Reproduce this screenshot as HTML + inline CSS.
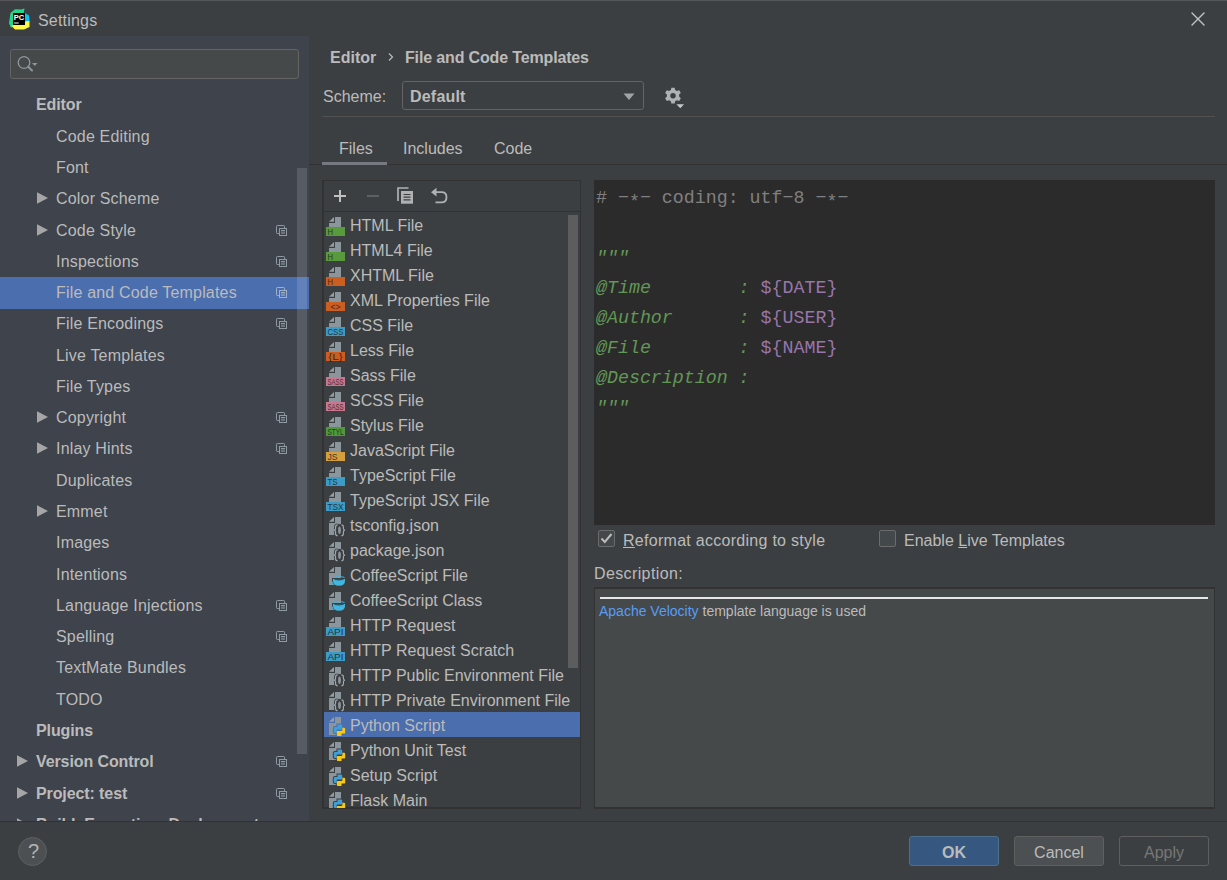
<!DOCTYPE html>
<html><head><meta charset="utf-8">
<style>
*{box-sizing:border-box;margin:0;padding:0}
html,body{width:1227px;height:880px;overflow:hidden;background:#3c3f41}
body{position:relative;font-family:"Liberation Sans",sans-serif;font-size:16px;color:#bbbbbb}
.a{position:absolute;white-space:pre}
.bold{font-weight:bold}
.code{font-family:"Liberation Mono",monospace;font-size:18.3px;line-height:30px}
</style></head><body>
<div class="a" style="left:0;top:0;width:1227px;height:1px;background:#555759"></div>
<!-- title -->
<div class="a" style="left:38px;top:10px;line-height:22px;letter-spacing:0.2px">Settings</div>
<svg class="a" style="left:9px;top:8px" width="22" height="22" viewBox="0 0 22 22">
 <polygon points="0,15 1.5,5 6,1.2 12,1.5 15.5,0.5 14.5,6 8,12 2,20" fill="#21d789"/>
 <polygon points="14,4 20,7.5 20.5,13.5 13,12" fill="#07c3f2"/>
 <polygon points="2.5,18 10,13.5 20.5,13 20.5,19 15,21.5 6,21.5" fill="#fcf84a"/>
 <rect x="4" y="5" width="12" height="12" fill="#000"/>
 <text x="4.8" y="11.6" font-family="Liberation Sans" font-weight="bold" font-size="7.5" fill="#fff" textLength="10.5" lengthAdjust="spacingAndGlyphs">PC</text>
 <rect x="5.2" y="14.5" width="4.5" height="1" fill="#fff"/>
</svg>
<svg class="a" style="left:1190px;top:11px" width="16" height="16" viewBox="0 0 16 16"><path d="M2 2L14 14M14 2L2 14" stroke="#c4c4c4" stroke-width="1.4" stroke-linecap="round"/></svg>

<!-- side panel -->
<div class="a" style="left:0;top:36px;width:309px;height:785px;background:#3e434c"></div>
<div class="a" style="left:10px;top:49px;width:289px;height:30px;background:#45494a;border:1px solid #646464;border-radius:3px"></div>
<svg class="a" style="left:16px;top:54px" width="26" height="22" viewBox="0 0 26 22">
 <circle cx="8" cy="8.5" r="5.8" fill="none" stroke="#8c969c" stroke-width="1.3"/>
 <path d="M12.2 12.7L16 16.5" stroke="#8c969c" stroke-width="2" stroke-linecap="round"/>
 <path d="M16 9L21.5 9L18.75 12z" fill="#8c969c"/>
</svg>
<div class="a" style="left:0;top:36px;width:309px;height:785px;overflow:hidden">
<div class="a bold" style="left:36px;top:53.40px;line-height:32px;letter-spacing:-0.1px">Editor</div>
<div class="a" style="left:56px;top:84.68px;line-height:32px;letter-spacing:0.18px">Code Editing</div>
<div class="a" style="left:56px;top:115.96px;line-height:32px;letter-spacing:0.18px">Font</div>
<svg class="a" style="left:37px;top:156px" width="12" height="13" viewBox="0 0 12 13"><path d="M0 0.3L11 6L0 11.7z" fill="#a6a6a6"/></svg>
<div class="a" style="left:56px;top:147.24px;line-height:32px;letter-spacing:0.18px">Color Scheme</div>
<svg class="a" style="left:37px;top:188px" width="12" height="13" viewBox="0 0 12 13"><path d="M0 0.3L11 6L0 11.7z" fill="#a6a6a6"/></svg>
<div class="a" style="left:56px;top:178.52px;line-height:32px;letter-spacing:0.18px">Code Style</div>
<svg class="a" style="left:275px;top:188px" width="14" height="14" viewBox="0 0 14 14"><rect x="1.5" y="1.5" width="8" height="8" rx="0.8" fill="none" stroke="#8e99a1" stroke-width="1"/><rect x="4" y="4" width="8" height="8" fill="#8e99a1"/><rect x="5" y="5" width="6" height="6" fill="#3e434c"/><rect x="6" y="6" width="4" height="1.3" fill="#8e99a1"/><rect x="6" y="8.2" width="4" height="1.6" fill="#8e99a1" opacity="0.7"/></svg>
<div class="a" style="left:56px;top:209.80px;line-height:32px;letter-spacing:0.18px">Inspections</div>
<svg class="a" style="left:275px;top:219px" width="14" height="14" viewBox="0 0 14 14"><rect x="1.5" y="1.5" width="8" height="8" rx="0.8" fill="none" stroke="#8e99a1" stroke-width="1"/><rect x="4" y="4" width="8" height="8" fill="#8e99a1"/><rect x="5" y="5" width="6" height="6" fill="#3e434c"/><rect x="6" y="6" width="4" height="1.3" fill="#8e99a1"/><rect x="6" y="8.2" width="4" height="1.6" fill="#8e99a1" opacity="0.7"/></svg>
<div class="a" style="left:0;top:241px;width:309px;height:32px;background:#4b6eaf"></div>
<div class="a" style="left:56px;top:241.08px;line-height:32px;letter-spacing:0.18px">File and Code Templates</div>
<svg class="a" style="left:275px;top:250px" width="14" height="14" viewBox="0 0 14 14"><rect x="1.5" y="1.5" width="8" height="8" rx="0.8" fill="none" stroke="#9fb0c8" stroke-width="1"/><rect x="4" y="4" width="8" height="8" fill="#9fb0c8"/><rect x="5" y="5" width="6" height="6" fill="#4b6eaf"/><rect x="6" y="6" width="4" height="1.3" fill="#9fb0c8"/><rect x="6" y="8.2" width="4" height="1.6" fill="#9fb0c8" opacity="0.7"/></svg>
<div class="a" style="left:56px;top:272.36px;line-height:32px;letter-spacing:0.18px">File Encodings</div>
<svg class="a" style="left:275px;top:281px" width="14" height="14" viewBox="0 0 14 14"><rect x="1.5" y="1.5" width="8" height="8" rx="0.8" fill="none" stroke="#8e99a1" stroke-width="1"/><rect x="4" y="4" width="8" height="8" fill="#8e99a1"/><rect x="5" y="5" width="6" height="6" fill="#3e434c"/><rect x="6" y="6" width="4" height="1.3" fill="#8e99a1"/><rect x="6" y="8.2" width="4" height="1.6" fill="#8e99a1" opacity="0.7"/></svg>
<div class="a" style="left:56px;top:303.64px;line-height:32px;letter-spacing:0.18px">Live Templates</div>
<div class="a" style="left:56px;top:334.92px;line-height:32px;letter-spacing:0.18px">File Types</div>
<svg class="a" style="left:37px;top:375px" width="12" height="13" viewBox="0 0 12 13"><path d="M0 0.3L11 6L0 11.7z" fill="#a6a6a6"/></svg>
<div class="a" style="left:56px;top:366.20px;line-height:32px;letter-spacing:0.18px">Copyright</div>
<svg class="a" style="left:275px;top:375px" width="14" height="14" viewBox="0 0 14 14"><rect x="1.5" y="1.5" width="8" height="8" rx="0.8" fill="none" stroke="#8e99a1" stroke-width="1"/><rect x="4" y="4" width="8" height="8" fill="#8e99a1"/><rect x="5" y="5" width="6" height="6" fill="#3e434c"/><rect x="6" y="6" width="4" height="1.3" fill="#8e99a1"/><rect x="6" y="8.2" width="4" height="1.6" fill="#8e99a1" opacity="0.7"/></svg>
<svg class="a" style="left:37px;top:406px" width="12" height="13" viewBox="0 0 12 13"><path d="M0 0.3L11 6L0 11.7z" fill="#a6a6a6"/></svg>
<div class="a" style="left:56px;top:397.48px;line-height:32px;letter-spacing:0.18px">Inlay Hints</div>
<svg class="a" style="left:275px;top:406px" width="14" height="14" viewBox="0 0 14 14"><rect x="1.5" y="1.5" width="8" height="8" rx="0.8" fill="none" stroke="#8e99a1" stroke-width="1"/><rect x="4" y="4" width="8" height="8" fill="#8e99a1"/><rect x="5" y="5" width="6" height="6" fill="#3e434c"/><rect x="6" y="6" width="4" height="1.3" fill="#8e99a1"/><rect x="6" y="8.2" width="4" height="1.6" fill="#8e99a1" opacity="0.7"/></svg>
<div class="a" style="left:56px;top:428.76px;line-height:32px;letter-spacing:0.18px">Duplicates</div>
<svg class="a" style="left:37px;top:469px" width="12" height="13" viewBox="0 0 12 13"><path d="M0 0.3L11 6L0 11.7z" fill="#a6a6a6"/></svg>
<div class="a" style="left:56px;top:460.04px;line-height:32px;letter-spacing:0.18px">Emmet</div>
<div class="a" style="left:56px;top:491.32px;line-height:32px;letter-spacing:0.18px">Images</div>
<div class="a" style="left:56px;top:522.60px;line-height:32px;letter-spacing:0.18px">Intentions</div>
<div class="a" style="left:56px;top:553.88px;line-height:32px;letter-spacing:0.18px">Language Injections</div>
<svg class="a" style="left:275px;top:563px" width="14" height="14" viewBox="0 0 14 14"><rect x="1.5" y="1.5" width="8" height="8" rx="0.8" fill="none" stroke="#8e99a1" stroke-width="1"/><rect x="4" y="4" width="8" height="8" fill="#8e99a1"/><rect x="5" y="5" width="6" height="6" fill="#3e434c"/><rect x="6" y="6" width="4" height="1.3" fill="#8e99a1"/><rect x="6" y="8.2" width="4" height="1.6" fill="#8e99a1" opacity="0.7"/></svg>
<div class="a" style="left:56px;top:585.16px;line-height:32px;letter-spacing:0.18px">Spelling</div>
<svg class="a" style="left:275px;top:594px" width="14" height="14" viewBox="0 0 14 14"><rect x="1.5" y="1.5" width="8" height="8" rx="0.8" fill="none" stroke="#8e99a1" stroke-width="1"/><rect x="4" y="4" width="8" height="8" fill="#8e99a1"/><rect x="5" y="5" width="6" height="6" fill="#3e434c"/><rect x="6" y="6" width="4" height="1.3" fill="#8e99a1"/><rect x="6" y="8.2" width="4" height="1.6" fill="#8e99a1" opacity="0.7"/></svg>
<div class="a" style="left:56px;top:616.44px;line-height:32px;letter-spacing:0.18px">TextMate Bundles</div>
<div class="a" style="left:56px;top:647.72px;line-height:32px;letter-spacing:0.18px">TODO</div>
<div class="a bold" style="left:36px;top:679.00px;line-height:32px;letter-spacing:-0.1px">Plugins</div>
<svg class="a" style="left:17px;top:719px" width="12" height="13" viewBox="0 0 12 13"><path d="M0 0.3L11 6L0 11.7z" fill="#a6a6a6"/></svg>
<div class="a bold" style="left:36px;top:710.28px;line-height:32px;letter-spacing:-0.1px">Version Control</div>
<svg class="a" style="left:275px;top:719px" width="14" height="14" viewBox="0 0 14 14"><rect x="1.5" y="1.5" width="8" height="8" rx="0.8" fill="none" stroke="#8e99a1" stroke-width="1"/><rect x="4" y="4" width="8" height="8" fill="#8e99a1"/><rect x="5" y="5" width="6" height="6" fill="#3e434c"/><rect x="6" y="6" width="4" height="1.3" fill="#8e99a1"/><rect x="6" y="8.2" width="4" height="1.6" fill="#8e99a1" opacity="0.7"/></svg>
<svg class="a" style="left:17px;top:751px" width="12" height="13" viewBox="0 0 12 13"><path d="M0 0.3L11 6L0 11.7z" fill="#a6a6a6"/></svg>
<div class="a bold" style="left:36px;top:741.56px;line-height:32px;letter-spacing:-0.1px">Project: test</div>
<svg class="a" style="left:275px;top:751px" width="14" height="14" viewBox="0 0 14 14"><rect x="1.5" y="1.5" width="8" height="8" rx="0.8" fill="none" stroke="#8e99a1" stroke-width="1"/><rect x="4" y="4" width="8" height="8" fill="#8e99a1"/><rect x="5" y="5" width="6" height="6" fill="#3e434c"/><rect x="6" y="6" width="4" height="1.3" fill="#8e99a1"/><rect x="6" y="8.2" width="4" height="1.6" fill="#8e99a1" opacity="0.7"/></svg>
<svg class="a" style="left:17px;top:782px" width="12" height="13" viewBox="0 0 12 13"><path d="M0 0.3L11 6L0 11.7z" fill="#a6a6a6"/></svg>
<div class="a bold" style="left:36px;top:772.84px;line-height:32px;letter-spacing:-0.1px">Build, Execution, Deployment</div>
</div>
<div class="a" style="left:297px;top:168px;width:10px;height:586px;background:rgba(255,255,255,0.13)"></div>

<!-- right panel -->
<div class="a bold" style="left:330px;top:47px;line-height:22px">Editor</div>
<svg class="a" style="left:387px;top:52px" width="8" height="10" viewBox="0 0 8 10"><path d="M2 1.5L5.5 5L2 8.5" fill="none" stroke="#bbbbbb" stroke-width="1.2"/></svg>
<div class="a bold" style="left:405px;top:47px;line-height:22px;letter-spacing:-0.15px">File and Code Templates</div>

<div class="a" style="left:323px;top:86px;line-height:22px">Scheme:</div>
<div class="a" style="left:402px;top:81px;width:242px;height:29px;border:1px solid #646464;border-radius:3px;background:#3c3f41"></div>
<div class="a bold" style="left:410px;top:86px;line-height:22px;letter-spacing:0.2px">Default</div>
<svg class="a" style="left:623px;top:93px" width="13" height="8" viewBox="0 0 13 8"><path d="M0.5 0.5H11.5L6 7z" fill="#a0a3a6"/></svg>
<svg class="a" style="left:663px;top:86px" width="24" height="24" viewBox="0 0 24 24">
 <g transform="translate(10,9.8) scale(1.09) translate(-10,-9)"><path fill="#afb1b3" fill-rule="evenodd" d="M8.5 1.5h3l0.5 2.2 1.6 0.9 2.1-0.8 1.5 2.6-1.6 1.5v1.8l1.6 1.5-1.5 2.6-2.1-0.8-1.6 0.9-0.5 2.2h-3l-0.5-2.2-1.6-0.9-2.1 0.8-1.5-2.6 1.6-1.5v-1.8l-1.6-1.5 1.5-2.6 2.1 0.8 1.6-0.9z M12.5 9a2.5 2.5 0 1 0 -5 0a2.5 2.5 0 1 0 5 0z"/></g>
 <path d="M13.5 18.3H21L17.25 22.3z" fill="#c8c8c8"/>
</svg>
<div class="a" style="left:322px;top:116px;width:893px;height:1px;background:#515151"></div>

<!-- tabs -->
<div class="a" style="left:309px;top:164px;width:918px;height:1px;background:#323232"></div>
<div class="a" style="left:339px;top:137.5px;line-height:22px">Files</div>
<div class="a" style="left:403px;top:137.5px;line-height:22px">Includes</div>
<div class="a" style="left:494px;top:137.5px;line-height:22px">Code</div>
<div class="a" style="left:322px;top:162px;width:65px;height:3px;background:#747a80"></div>

<!-- list panel -->
<div class="a" style="left:322px;top:180px;width:259px;height:629px;border:1px solid #323232;border-left-width:2px;border-bottom-width:2px;background:#3c3f41"></div>
<div class="a" style="left:324px;top:211px;width:256px;height:1px;background:#323232"></div>
<svg class="a" style="left:328px;top:184px" width="130" height="24" viewBox="0 0 130 24">
 <path d="M12 6V18M6 12H18" stroke="#c0c0c0" stroke-width="2"/>
 <path d="M39 12H51" stroke="#5e6062" stroke-width="2"/>
 <path d="M70 17V4H80.5" fill="none" stroke="#afb1b3" stroke-width="1.7"/>
 <rect x="73" y="7" width="12" height="12.7" fill="#afb1b3"/>
 <path d="M75.5 10.5H82.5M75.5 13.2H82.5M75.5 15.9H82.5" stroke="#3c3f41" stroke-width="1.2"/>
 <path d="M107.5 8.2H113.5Q118.5 8.2 118.5 13.2Q118.5 18.3 113.5 18.3H107.5" fill="none" stroke="#afb1b3" stroke-width="1.8"/>
 <path d="M103 8.2L108.5 3.8V12.6z" fill="#afb1b3"/>
</svg>
<div class="a" style="left:324px;top:212px;width:256px;height:596px;overflow:hidden">
<svg class="a" style="left:2px;top:4px" width="21" height="21" viewBox="0 0 21 21"><path d="M9 1H15V11H3V7H9z" fill="#8b959c"/><path d="M3 5.8L8 1V5.8z" fill="#939da4"/><rect x="0" y="11" width="19" height="9" fill="#599b3c"/><text x="1.5" y="18.8" font-family="Liberation Sans" font-size="9.5" fill="#1a1a1a" opacity="0.8" textLength="5.5" lengthAdjust="spacingAndGlyphs">H</text></svg>
<div class="a" style="left:26px;top:1.30px;line-height:25px">HTML File</div>
<svg class="a" style="left:2px;top:29px" width="21" height="21" viewBox="0 0 21 21"><path d="M9 1H15V11H3V7H9z" fill="#8b959c"/><path d="M3 5.8L8 1V5.8z" fill="#939da4"/><rect x="0" y="11" width="19" height="9" fill="#599b3c"/><text x="1.5" y="18.8" font-family="Liberation Sans" font-size="9.5" fill="#1a1a1a" opacity="0.8" textLength="5.5" lengthAdjust="spacingAndGlyphs">H</text></svg>
<div class="a" style="left:26px;top:26.30px;line-height:25px">HTML4 File</div>
<svg class="a" style="left:2px;top:54px" width="21" height="21" viewBox="0 0 21 21"><path d="M9 1H15V11H3V7H9z" fill="#8b959c"/><path d="M3 5.8L8 1V5.8z" fill="#939da4"/><rect x="0" y="11" width="19" height="9" fill="#cc5e22"/><text x="1.5" y="18.8" font-family="Liberation Sans" font-size="9.5" fill="#1a1a1a" opacity="0.8" textLength="5.5" lengthAdjust="spacingAndGlyphs">H</text></svg>
<div class="a" style="left:26px;top:51.30px;line-height:25px">XHTML File</div>
<svg class="a" style="left:2px;top:79px" width="21" height="21" viewBox="0 0 21 21"><path d="M9 1H15V11H3V7H9z" fill="#8b959c"/><path d="M3 5.8L8 1V5.8z" fill="#939da4"/><rect x="0" y="11" width="19" height="9" fill="#cc5e22"/><text x="4.5" y="18.8" font-family="Liberation Sans" font-size="9.5" fill="#1a1a1a" opacity="0.8" textLength="10" lengthAdjust="spacingAndGlyphs">&lt;&gt;</text></svg>
<div class="a" style="left:26px;top:76.30px;line-height:25px">XML Properties File</div>
<svg class="a" style="left:2px;top:104px" width="21" height="21" viewBox="0 0 21 21"><path d="M9 1H15V11H3V7H9z" fill="#8b959c"/><path d="M3 5.8L8 1V5.8z" fill="#939da4"/><rect x="0" y="11" width="19" height="9" fill="#3c9cc6"/><text x="1.5" y="18.8" font-family="Liberation Sans" font-size="9.5" fill="#1a1a1a" opacity="0.8" textLength="16" lengthAdjust="spacingAndGlyphs">CSS</text></svg>
<div class="a" style="left:26px;top:101.30px;line-height:25px">CSS File</div>
<svg class="a" style="left:2px;top:129px" width="21" height="21" viewBox="0 0 21 21"><path d="M9 1H15V11H3V7H9z" fill="#8b959c"/><path d="M3 5.8L8 1V5.8z" fill="#939da4"/><rect x="0" y="11" width="19" height="9" fill="#cc5e22"/><text x="2.25" y="18.8" font-family="Liberation Sans" font-size="9.5" fill="#1a1a1a" opacity="0.8" textLength="14.5" lengthAdjust="spacingAndGlyphs">{L}</text></svg>
<div class="a" style="left:26px;top:126.30px;line-height:25px">Less File</div>
<svg class="a" style="left:2px;top:154px" width="21" height="21" viewBox="0 0 21 21"><path d="M9 1H15V11H3V7H9z" fill="#8b959c"/><path d="M3 5.8L8 1V5.8z" fill="#939da4"/><rect x="0" y="11" width="19" height="9" fill="#c77890"/><text x="1.5" y="18.8" font-family="Liberation Sans" font-size="9.5" fill="#1a1a1a" opacity="0.8" textLength="16" lengthAdjust="spacingAndGlyphs">SASS</text></svg>
<div class="a" style="left:26px;top:151.30px;line-height:25px">Sass File</div>
<svg class="a" style="left:2px;top:179px" width="21" height="21" viewBox="0 0 21 21"><path d="M9 1H15V11H3V7H9z" fill="#8b959c"/><path d="M3 5.8L8 1V5.8z" fill="#939da4"/><rect x="0" y="11" width="19" height="9" fill="#c77890"/><text x="1.5" y="18.8" font-family="Liberation Sans" font-size="9.5" fill="#1a1a1a" opacity="0.8" textLength="16" lengthAdjust="spacingAndGlyphs">SASS</text></svg>
<div class="a" style="left:26px;top:176.30px;line-height:25px">SCSS File</div>
<svg class="a" style="left:2px;top:204px" width="21" height="21" viewBox="0 0 21 21"><path d="M9 1H15V11H3V7H9z" fill="#8b959c"/><path d="M3 5.8L8 1V5.8z" fill="#939da4"/><rect x="0" y="11" width="19" height="9" fill="#4e9a3a"/><text x="1.5" y="18.8" font-family="Liberation Sans" font-size="9.5" fill="#1a1a1a" opacity="0.8" textLength="16" lengthAdjust="spacingAndGlyphs">STYL</text></svg>
<div class="a" style="left:26px;top:201.30px;line-height:25px">Stylus File</div>
<svg class="a" style="left:2px;top:229px" width="21" height="21" viewBox="0 0 21 21"><path d="M9 1H15V11H3V7H9z" fill="#8b959c"/><path d="M3 5.8L8 1V5.8z" fill="#939da4"/><rect x="0" y="11" width="19" height="9" fill="#d69f3d"/><text x="1.5" y="18.8" font-family="Liberation Sans" font-size="9.5" fill="#1a1a1a" opacity="0.8" textLength="10" lengthAdjust="spacingAndGlyphs">JS</text></svg>
<div class="a" style="left:26px;top:226.30px;line-height:25px">JavaScript File</div>
<svg class="a" style="left:2px;top:254px" width="21" height="21" viewBox="0 0 21 21"><path d="M9 1H15V11H3V7H9z" fill="#8b959c"/><path d="M3 5.8L8 1V5.8z" fill="#939da4"/><rect x="0" y="11" width="19" height="9" fill="#3c9cc6"/><text x="1.5" y="18.8" font-family="Liberation Sans" font-size="9.5" fill="#1a1a1a" opacity="0.8" textLength="10" lengthAdjust="spacingAndGlyphs">TS</text></svg>
<div class="a" style="left:26px;top:251.30px;line-height:25px">TypeScript File</div>
<svg class="a" style="left:2px;top:279px" width="21" height="21" viewBox="0 0 21 21"><path d="M9 1H15V11H3V7H9z" fill="#8b959c"/><path d="M3 5.8L8 1V5.8z" fill="#939da4"/><rect x="0" y="11" width="19" height="9" fill="#3c9cc6"/><text x="1.5" y="18.8" font-family="Liberation Sans" font-size="9.5" fill="#1a1a1a" opacity="0.8" textLength="16" lengthAdjust="spacingAndGlyphs">TSX</text></svg>
<div class="a" style="left:26px;top:276.30px;line-height:25px">TypeScript JSX File</div>
<svg class="a" style="left:2px;top:304px" width="21" height="21" viewBox="0 0 21 21"><path d="M9 1H15V19H3V7H9z" fill="#8b959c"/><path d="M3 5.8L8 1V5.8z" fill="#939da4"/><path d="M11.6 8.9Q9.6 8.9 9.6 10.9V12.6Q9.6 14.2 7.9 14.2Q9.6 14.2 9.6 15.8V17.8Q9.6 19.8 11.6 19.8" fill="#3c3f41" stroke="#3c3f41" stroke-width="3"/><path d="M15.4 8.9Q17.4 8.9 17.4 10.9V12.6Q17.4 14.2 19.1 14.2Q17.4 14.2 17.4 15.8V17.8Q17.4 19.8 15.4 19.8" fill="#3c3f41" stroke="#3c3f41" stroke-width="3"/><rect x="10" y="8" width="7" height="13" fill="#3c3f41"/><g fill="none" stroke="#a3adb4" stroke-width="1.1"><path d="M11.6 8.9Q9.6 8.9 9.6 10.9V12.6Q9.6 14.2 7.9 14.2Q9.6 14.2 9.6 15.8V17.8Q9.6 19.8 11.6 19.8"/><path d="M15.4 8.9Q17.4 8.9 17.4 10.9V12.6Q17.4 14.2 19.1 14.2Q17.4 14.2 17.4 15.8V17.8Q17.4 19.8 15.4 19.8"/></g><ellipse cx="13.5" cy="14.3" rx="1.4" ry="3.7" fill="#8b959c"/></svg>
<div class="a" style="left:26px;top:301.30px;line-height:25px">tsconfig.json</div>
<svg class="a" style="left:2px;top:329px" width="21" height="21" viewBox="0 0 21 21"><path d="M9 1H15V19H3V7H9z" fill="#8b959c"/><path d="M3 5.8L8 1V5.8z" fill="#939da4"/><path d="M11.6 8.9Q9.6 8.9 9.6 10.9V12.6Q9.6 14.2 7.9 14.2Q9.6 14.2 9.6 15.8V17.8Q9.6 19.8 11.6 19.8" fill="#3c3f41" stroke="#3c3f41" stroke-width="3"/><path d="M15.4 8.9Q17.4 8.9 17.4 10.9V12.6Q17.4 14.2 19.1 14.2Q17.4 14.2 17.4 15.8V17.8Q17.4 19.8 15.4 19.8" fill="#3c3f41" stroke="#3c3f41" stroke-width="3"/><rect x="10" y="8" width="7" height="13" fill="#3c3f41"/><g fill="none" stroke="#a3adb4" stroke-width="1.1"><path d="M11.6 8.9Q9.6 8.9 9.6 10.9V12.6Q9.6 14.2 7.9 14.2Q9.6 14.2 9.6 15.8V17.8Q9.6 19.8 11.6 19.8"/><path d="M15.4 8.9Q17.4 8.9 17.4 10.9V12.6Q17.4 14.2 19.1 14.2Q17.4 14.2 17.4 15.8V17.8Q17.4 19.8 15.4 19.8"/></g><ellipse cx="13.5" cy="14.3" rx="1.4" ry="3.7" fill="#8b959c"/></svg>
<div class="a" style="left:26px;top:326.30px;line-height:25px">package.json</div>
<svg class="a" style="left:2px;top:354px" width="21" height="21" viewBox="0 0 21 21"><path d="M9 1H15V19H3V7H9z" fill="#8b959c"/><path d="M3 5.8L8 1V5.8z" fill="#939da4"/><path d="M6 12H20V14.5Q20 20.5 13 20.5Q6 20.5 6 14.5z" fill="#3c3f41"/><path d="M7 13H19V14.8Q19 19.8 13 19.8Q7 19.8 7 14.8z" fill="#40b6e0"/><ellipse cx="13" cy="13.6" rx="5" ry="0.8" fill="#2a5868"/><path d="M8 11.5Q10 10.3 13 11Q16 10.3 18.5 11.5" fill="none" stroke="#40b6e0" stroke-width="1"/><path d="M7.2 16Q5.5 16 5.8 17.6Q6.3 18.6 8.2 18.2" fill="none" stroke="#40b6e0" stroke-width="1"/></svg>
<div class="a" style="left:26px;top:351.30px;line-height:25px">CoffeeScript File</div>
<svg class="a" style="left:2px;top:379px" width="21" height="21" viewBox="0 0 21 21"><path d="M9 1H15V19H3V7H9z" fill="#8b959c"/><path d="M3 5.8L8 1V5.8z" fill="#939da4"/><path d="M6 12H20V14.5Q20 20.5 13 20.5Q6 20.5 6 14.5z" fill="#3c3f41"/><path d="M7 13H19V14.8Q19 19.8 13 19.8Q7 19.8 7 14.8z" fill="#40b6e0"/><ellipse cx="13" cy="13.6" rx="5" ry="0.8" fill="#2a5868"/><path d="M8 11.5Q10 10.3 13 11Q16 10.3 18.5 11.5" fill="none" stroke="#40b6e0" stroke-width="1"/><path d="M7.2 16Q5.5 16 5.8 17.6Q6.3 18.6 8.2 18.2" fill="none" stroke="#40b6e0" stroke-width="1"/></svg>
<div class="a" style="left:26px;top:376.30px;line-height:25px">CoffeeScript Class</div>
<svg class="a" style="left:2px;top:404px" width="21" height="21" viewBox="0 0 21 21"><path d="M9 1H15V11H3V7H9z" fill="#8b959c"/><path d="M3 5.8L8 1V5.8z" fill="#939da4"/><rect x="0" y="11" width="19" height="9" fill="#3c9cc6"/><text x="1.5" y="18.8" font-family="Liberation Sans" font-size="9.5" fill="#1a1a1a" opacity="0.8" textLength="16" lengthAdjust="spacingAndGlyphs">API</text></svg>
<div class="a" style="left:26px;top:401.30px;line-height:25px">HTTP Request</div>
<svg class="a" style="left:2px;top:429px" width="21" height="21" viewBox="0 0 21 21"><path d="M9 1H15V11H3V7H9z" fill="#8b959c"/><path d="M3 5.8L8 1V5.8z" fill="#939da4"/><rect x="0" y="11" width="19" height="9" fill="#3c9cc6"/><text x="1.5" y="18.8" font-family="Liberation Sans" font-size="9.5" fill="#1a1a1a" opacity="0.8" textLength="16" lengthAdjust="spacingAndGlyphs">API</text></svg>
<div class="a" style="left:26px;top:426.30px;line-height:25px">HTTP Request Scratch</div>
<svg class="a" style="left:2px;top:454px" width="21" height="21" viewBox="0 0 21 21"><path d="M9 1H15V19H3V7H9z" fill="#8b959c"/><path d="M3 5.8L8 1V5.8z" fill="#939da4"/><path d="M11.6 8.9Q9.6 8.9 9.6 10.9V12.6Q9.6 14.2 7.9 14.2Q9.6 14.2 9.6 15.8V17.8Q9.6 19.8 11.6 19.8" fill="#3c3f41" stroke="#3c3f41" stroke-width="3"/><path d="M15.4 8.9Q17.4 8.9 17.4 10.9V12.6Q17.4 14.2 19.1 14.2Q17.4 14.2 17.4 15.8V17.8Q17.4 19.8 15.4 19.8" fill="#3c3f41" stroke="#3c3f41" stroke-width="3"/><rect x="10" y="8" width="7" height="13" fill="#3c3f41"/><g fill="none" stroke="#a3adb4" stroke-width="1.1"><path d="M11.6 8.9Q9.6 8.9 9.6 10.9V12.6Q9.6 14.2 7.9 14.2Q9.6 14.2 9.6 15.8V17.8Q9.6 19.8 11.6 19.8"/><path d="M15.4 8.9Q17.4 8.9 17.4 10.9V12.6Q17.4 14.2 19.1 14.2Q17.4 14.2 17.4 15.8V17.8Q17.4 19.8 15.4 19.8"/></g><ellipse cx="13.5" cy="14.3" rx="1.4" ry="3.7" fill="#8b959c"/></svg>
<div class="a" style="left:26px;top:451.30px;line-height:25px">HTTP Public Environment File</div>
<svg class="a" style="left:2px;top:479px" width="21" height="21" viewBox="0 0 21 21"><path d="M9 1H15V19H3V7H9z" fill="#8b959c"/><path d="M3 5.8L8 1V5.8z" fill="#939da4"/><path d="M11.6 8.9Q9.6 8.9 9.6 10.9V12.6Q9.6 14.2 7.9 14.2Q9.6 14.2 9.6 15.8V17.8Q9.6 19.8 11.6 19.8" fill="#3c3f41" stroke="#3c3f41" stroke-width="3"/><path d="M15.4 8.9Q17.4 8.9 17.4 10.9V12.6Q17.4 14.2 19.1 14.2Q17.4 14.2 17.4 15.8V17.8Q17.4 19.8 15.4 19.8" fill="#3c3f41" stroke="#3c3f41" stroke-width="3"/><rect x="10" y="8" width="7" height="13" fill="#3c3f41"/><g fill="none" stroke="#a3adb4" stroke-width="1.1"><path d="M11.6 8.9Q9.6 8.9 9.6 10.9V12.6Q9.6 14.2 7.9 14.2Q9.6 14.2 9.6 15.8V17.8Q9.6 19.8 11.6 19.8"/><path d="M15.4 8.9Q17.4 8.9 17.4 10.9V12.6Q17.4 14.2 19.1 14.2Q17.4 14.2 17.4 15.8V17.8Q17.4 19.8 15.4 19.8"/></g><ellipse cx="13.5" cy="14.3" rx="1.4" ry="3.7" fill="#8b959c"/></svg>
<div class="a" style="left:26px;top:476.30px;line-height:25px">HTTP Private Environment File</div>
<div class="a" style="left:0;top:500px;width:256px;height:25px;background:#4b6eaf"></div>
<svg class="a" style="left:2px;top:504px" width="21" height="21" viewBox="0 0 21 21"><path d="M9 1H15V19H3V7H9z" fill="#8b959c"/><path d="M3 5.8L8 1V5.8z" fill="#939da4"/><path d="M11.5 8.6H15Q16.2 8.6 16.2 9.8V13.6H11.8Q10.6 13.6 10.6 14.8V16.9H9Q7.8 16.9 7.8 15.7V12.2Q7.8 11 9 11H11.5z" fill="#4b6eaf" stroke="#4b6eaf" stroke-width="2"/><path d="M15.5 20H12Q10.8 20 10.8 18.8V15H15.2Q16.4 15 16.4 13.8V11.7H18Q19.2 11.7 19.2 12.9V16.4Q19.2 17.6 18 17.6H15.5z" fill="#4b6eaf" stroke="#4b6eaf" stroke-width="2"/><path d="M11.5 8.6H15Q16.2 8.6 16.2 9.8V13.6H11.8Q10.6 13.6 10.6 14.8V16.9H9Q7.8 16.9 7.8 15.7V12.2Q7.8 11 9 11H11.5z" fill="#3f9fd9"/><path d="M15.5 20H12Q10.8 20 10.8 18.8V15H15.2Q16.4 15 16.4 13.8V11.7H18Q19.2 11.7 19.2 12.9V16.4Q19.2 17.6 18 17.6H15.5z" fill="#f6c915"/></svg>
<div class="a" style="left:26px;top:501.30px;line-height:25px">Python Script</div>
<svg class="a" style="left:2px;top:529px" width="21" height="21" viewBox="0 0 21 21"><path d="M9 1H15V19H3V7H9z" fill="#8b959c"/><path d="M3 5.8L8 1V5.8z" fill="#939da4"/><path d="M11.5 8.6H15Q16.2 8.6 16.2 9.8V13.6H11.8Q10.6 13.6 10.6 14.8V16.9H9Q7.8 16.9 7.8 15.7V12.2Q7.8 11 9 11H11.5z" fill="#3c3f41" stroke="#3c3f41" stroke-width="2"/><path d="M15.5 20H12Q10.8 20 10.8 18.8V15H15.2Q16.4 15 16.4 13.8V11.7H18Q19.2 11.7 19.2 12.9V16.4Q19.2 17.6 18 17.6H15.5z" fill="#3c3f41" stroke="#3c3f41" stroke-width="2"/><path d="M11.5 8.6H15Q16.2 8.6 16.2 9.8V13.6H11.8Q10.6 13.6 10.6 14.8V16.9H9Q7.8 16.9 7.8 15.7V12.2Q7.8 11 9 11H11.5z" fill="#3f9fd9"/><path d="M15.5 20H12Q10.8 20 10.8 18.8V15H15.2Q16.4 15 16.4 13.8V11.7H18Q19.2 11.7 19.2 12.9V16.4Q19.2 17.6 18 17.6H15.5z" fill="#f6c915"/></svg>
<div class="a" style="left:26px;top:526.30px;line-height:25px">Python Unit Test</div>
<svg class="a" style="left:2px;top:554px" width="21" height="21" viewBox="0 0 21 21"><path d="M9 1H15V19H3V7H9z" fill="#8b959c"/><path d="M3 5.8L8 1V5.8z" fill="#939da4"/><path d="M11.5 8.6H15Q16.2 8.6 16.2 9.8V13.6H11.8Q10.6 13.6 10.6 14.8V16.9H9Q7.8 16.9 7.8 15.7V12.2Q7.8 11 9 11H11.5z" fill="#3c3f41" stroke="#3c3f41" stroke-width="2"/><path d="M15.5 20H12Q10.8 20 10.8 18.8V15H15.2Q16.4 15 16.4 13.8V11.7H18Q19.2 11.7 19.2 12.9V16.4Q19.2 17.6 18 17.6H15.5z" fill="#3c3f41" stroke="#3c3f41" stroke-width="2"/><path d="M11.5 8.6H15Q16.2 8.6 16.2 9.8V13.6H11.8Q10.6 13.6 10.6 14.8V16.9H9Q7.8 16.9 7.8 15.7V12.2Q7.8 11 9 11H11.5z" fill="#3f9fd9"/><path d="M15.5 20H12Q10.8 20 10.8 18.8V15H15.2Q16.4 15 16.4 13.8V11.7H18Q19.2 11.7 19.2 12.9V16.4Q19.2 17.6 18 17.6H15.5z" fill="#f6c915"/></svg>
<div class="a" style="left:26px;top:551.30px;line-height:25px">Setup Script</div>
<svg class="a" style="left:2px;top:579px" width="21" height="21" viewBox="0 0 21 21"><path d="M9 1H15V19H3V7H9z" fill="#8b959c"/><path d="M3 5.8L8 1V5.8z" fill="#939da4"/><path d="M11.5 8.6H15Q16.2 8.6 16.2 9.8V13.6H11.8Q10.6 13.6 10.6 14.8V16.9H9Q7.8 16.9 7.8 15.7V12.2Q7.8 11 9 11H11.5z" fill="#3c3f41" stroke="#3c3f41" stroke-width="2"/><path d="M15.5 20H12Q10.8 20 10.8 18.8V15H15.2Q16.4 15 16.4 13.8V11.7H18Q19.2 11.7 19.2 12.9V16.4Q19.2 17.6 18 17.6H15.5z" fill="#3c3f41" stroke="#3c3f41" stroke-width="2"/><path d="M11.5 8.6H15Q16.2 8.6 16.2 9.8V13.6H11.8Q10.6 13.6 10.6 14.8V16.9H9Q7.8 16.9 7.8 15.7V12.2Q7.8 11 9 11H11.5z" fill="#3f9fd9"/><path d="M15.5 20H12Q10.8 20 10.8 18.8V15H15.2Q16.4 15 16.4 13.8V11.7H18Q19.2 11.7 19.2 12.9V16.4Q19.2 17.6 18 17.6H15.5z" fill="#f6c915"/></svg>
<div class="a" style="left:26px;top:576.30px;line-height:25px">Flask Main</div>
</div>
<div class="a" style="left:568px;top:215px;width:10px;height:453px;background:#5b5d5f"></div>

<!-- editor -->
<div class="a" style="left:594px;top:180px;width:621px;height:345px;background:#2b2b2b"></div>
<div class="a code" style="left:596px;top:182.5px"><span style="color:#808080"># −<span style="position:relative;top:4px">*</span>− coding: utf−8 −<span style="position:relative;top:4px">*</span>−</span></div>
<div class="a code" style="left:596px;top:212.5px"></div>
<div class="a code" style="left:596px;top:242.5px"><span style="color:#629755;font-style:italic">"""</span></div>
<div class="a code" style="left:596px;top:272.5px"><span style="color:#629755;font-style:italic">@Time        : </span><span style="color:#9876aa">${DATE}</span></div>
<div class="a code" style="left:596px;top:302.5px"><span style="color:#629755;font-style:italic">@Author      : </span><span style="color:#9876aa">${USER}</span></div>
<div class="a code" style="left:596px;top:332.5px"><span style="color:#629755;font-style:italic">@File        : </span><span style="color:#9876aa">${NAME}</span></div>
<div class="a code" style="left:596px;top:362.5px"><span style="color:#629755;font-style:italic">@Description :</span></div>
<div class="a code" style="left:596px;top:392.5px"><span style="color:#629755;font-style:italic">"""</span></div>

<!-- checkboxes -->
<div class="a" style="left:598px;top:530px;width:17px;height:17px;border:1px solid #6b6b6b;border-radius:2px;background:#43494a"></div>
<svg class="a" style="left:598px;top:530px" width="17" height="17" viewBox="0 0 17 17"><path d="M3.5 8.5L6.8 12L13.5 4" fill="none" stroke="#bbbbbb" stroke-width="2"/></svg>
<div class="a" style="left:623px;top:530px;line-height:22px;letter-spacing:0.28px"><u>R</u>eformat according to style</div>
<div class="a" style="left:879px;top:530px;width:17px;height:17px;border:1px solid #6b6b6b;border-radius:2px;background:#43494a"></div>
<div class="a" style="left:904px;top:530px;line-height:22px">Enable <u>L</u>ive Templates</div>

<div class="a" style="left:594px;top:563px;line-height:22px;letter-spacing:0.38px">Description:</div>
<div class="a" style="left:594px;top:587px;width:621px;height:222px;border:1px solid #323232;border-top-width:2px;border-bottom-width:2px;background:#45494a"></div>
<div class="a" style="left:600px;top:597px;width:608px;height:2px;background:#e6e6e6"></div>
<div class="a" style="left:599px;top:603px;font-size:14px;line-height:16px"><span style="color:#589df6">Apache Velocity</span> template language is used</div>

<!-- bottom -->
<div class="a" style="left:0;top:821px;width:1227px;height:1px;background:#323232"></div>
<div class="a" style="left:18px;top:837px;width:29px;height:29px;border-radius:50%;border:1px solid #5e6060;background:#4c5052"></div>
<div class="a" style="left:19px;top:840px;width:29px;text-align:center;line-height:22px;font-size:20px;color:#b4b4b4">?</div>
<div class="a bold" style="left:909px;top:836px;width:90px;height:30px;border:1px solid #4c708c;border-radius:3px;background:#365880;text-align:center;line-height:32px">OK</div>
<div class="a" style="left:1014px;top:836px;width:90px;height:30px;border:1px solid #5e6060;border-radius:3px;background:#4c5052;text-align:center;line-height:32px">Cancel</div>
<div class="a" style="left:1119px;top:836px;width:90px;height:30px;border:1px solid #5e6060;border-radius:3px;background:#3c3f41;text-align:center;line-height:32px;color:#777777">Apply</div>
</body></html>
